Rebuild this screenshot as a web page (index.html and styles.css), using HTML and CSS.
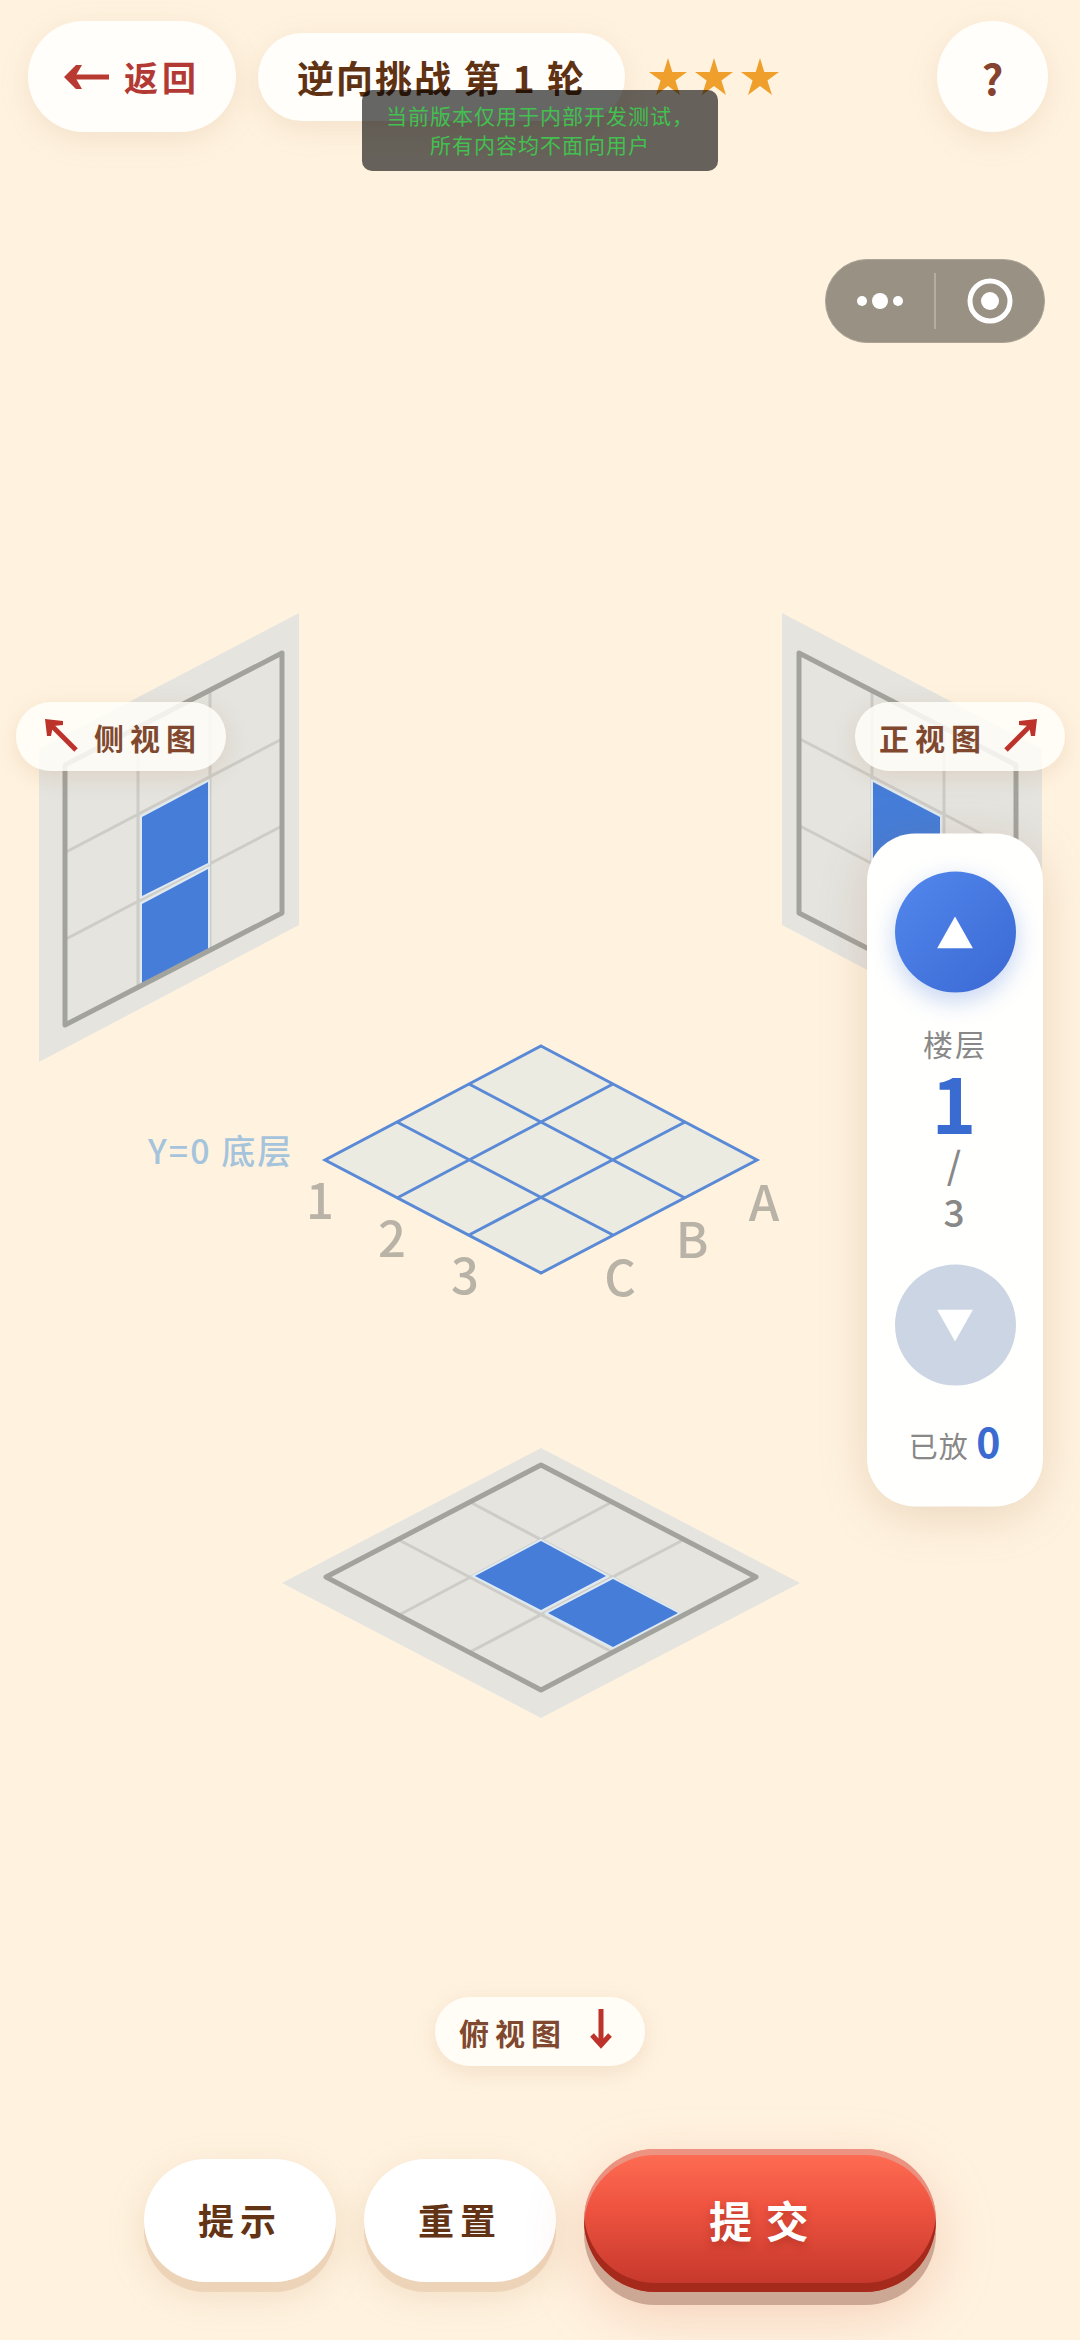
FILE: index.html
```html
<!DOCTYPE html>
<html lang="zh-CN">
<head>
    <meta charset="UTF-8">
    <meta name="viewport" content="width=device-width, initial-scale=1.0">
    <title>逆向挑战</title>
    <link rel="stylesheet" href="styles.css">
</head>
<body>
    <header class="top-bar">
        <button class="pill back-btn">
            <svg class="back-arrow" viewBox="0 0 46 26" aria-hidden="true">
                <path d="M8 13H45" /><path class="tip" d="M0 13L12 1H18L11 13L18 25H12Z" />
            </svg>
            <span>返回</span>
        </button>
        <h1 class="pill title">逆向挑战 第 1 轮</h1>
        <div class="stars" role="img" aria-label="难度三星">
            <svg viewBox="0 0 38 38"><path d="M19 0L23.3 14H38L26.4 22.5L31 37L19 28L7 37L11.6 22.5L0 14H14.7Z" /></svg>
            <svg viewBox="0 0 38 38"><path d="M19 0L23.3 14H38L26.4 22.5L31 37L19 28L7 37L11.6 22.5L0 14H14.7Z" /></svg>
            <svg viewBox="0 0 38 38"><path d="M19 0L23.3 14H38L26.4 22.5L31 37L19 28L7 37L11.6 22.5L0 14H14.7Z" /></svg>
        </div>
        <button class="pill help-btn" aria-label="帮助">?</button>
    </header>

    <main class="stage">
        <svg class="scene" viewBox="0 400 1080 1350">
            <!-- side view wall -->
            <polygon class="wall" points="39,749 299,613 299,925 39,1062" />
            <path class="grid" d="M138 727V987M210 690V950M66 852L282 739M66 939L282 826" />
            <polygon class="cell" points="142,817 208,782 208,863 142,896" />
            <polygon class="cell" points="142,904 208,869 208,951 142,985" />
            <polygon class="frame" points="65,765 282,653 282,913 65,1025" />

            <!-- front view wall -->
            <polygon class="wall" points="1042,749 782,613 782,925 1042,1062" />
            <path class="grid" d="M944 727V987M872 690V950M1016 852L800 739M1016 939L800 826" />
            <polygon class="cell" points="940,817 873,782 873,863 940,896" />
            <polygon class="cell" points="940,904 873,869 873,951 940,985" />
            <polygon class="frame" points="1016,765 799,653 799,913 1016,1025" />

            <!-- current floor -->
            <polygon class="floor" points="541,1046 757,1160 541,1273 325,1160" />
            <path class="floor-line" d="M469 1084L685 1198M397 1122L613 1235M613 1084L397 1198M685 1122L469 1235" />
            <text class="floor-name" x="148" y="1164">Y=0 底层</text>
            <g class="axis">
                <text x="320" y="1219">1</text>
                <text x="392" y="1257">2</text>
                <text x="465" y="1294">3</text>
                <text x="764" y="1221">A</text>
                <text x="692" y="1258">B</text>
                <text x="620" y="1296">C</text>
            </g>

            <!-- top view -->
            <polygon class="wall" points="541,1448 800,1583 541,1718 282,1583" />
            <path class="grid" d="M470 1502L683 1615M399 1540L612 1652M612 1502L399 1615M683 1540L470 1652" />
            <polygon class="cell" points="541,1541 606,1576 541,1610 475,1576" />
            <polygon class="cell" points="613,1579 678,1613 613,1647 548,1613" />
            <polygon class="frame" points="541,1465 756,1577 541,1690 326,1577" />
        </svg>
        <button class="view-tag view-top">
            <span>俯视图</span>
            <svg viewBox="0 0 40 40" aria-hidden="true"><path d="M20 0V36M11 26L20 36L29 26" /></svg>
        </button>
    </main>

    <footer class="actions">
        <button class="action-btn">提示</button>
        <button class="action-btn">重置</button>
        <button class="action-btn submit-btn">提 交</button>
    </footer>

    <button class="view-tag view-side">
        <svg viewBox="0 0 40 40" aria-hidden="true"><path d="M36 36L9 9" /><path class="tip" d="M5 5L23 7V11L13 12L11 22H7Z" /></svg>
        <span>侧视图</span>
    </button>
    <button class="view-tag view-front">
        <span>正视图</span>
        <svg viewBox="0 0 40 40" aria-hidden="true"><path d="M5 36L32 9" /><path class="tip" d="M36 5L18 7V11L28 12L30 22H34Z" /></svg>
    </button>

    <aside class="floor-panel">
        <button class="floor-btn" aria-label="上一层">
            <svg viewBox="0 0 36 32"><path d="M18 0L36 32H0Z" /></svg>
        </button>
        <div class="floor-info">
            <span class="floor-label">楼层</span>
            <strong class="floor-now">1</strong>
            <span class="floor-total">/</span>
            <span class="floor-total">3</span>
        </div>
        <button class="floor-btn" aria-label="下一层" disabled>
            <svg viewBox="0 0 36 32"><path d="M0 0H36L18 32Z" /></svg>
        </button>
        <div class="placed">已放 <strong>0</strong></div>
    </aside>

    <div class="capsule">
        <button aria-label="更多">
            <svg viewBox="0 0 50 50"><circle cx="7" cy="25" r="5" /><circle cx="25" cy="25" r="8" /><circle cx="43" cy="25" r="5" /></svg>
        </button>
        <button aria-label="关闭">
            <svg viewBox="0 0 50 50"><circle class="ring" cx="25" cy="25" r="20" /><circle cx="25" cy="25" r="9" /></svg>
        </button>
    </div>

    <div class="dev-notice">当前版本仅用于内部开发测试，<br>所有内容均不面向用户</div>
</body>
</html>
```

FILE: styles.css
```css
* {
    box-sizing: border-box;
}

body {
    margin: 0;
    min-height: 100vh;
    display: flex;
    flex-direction: column;
    position: relative;
    overflow-x: hidden;
    background-color: #fff3e0;
    color: #5f3213;
    font-family: "Noto Sans CJK SC", sans-serif;
}

button {
    border: none;
    padding: 0;
    font-family: inherit;
    cursor: pointer;
}

svg {
    display: block;
}

/* top bar */
.top-bar {
    display: flex;
    align-items: center;
    gap: 22px;
    padding: 21px 32px 21px 28px;
}

.pill {
    display: flex;
    align-items: center;
    justify-content: center;
    margin: 0;
    background-color: #fffefa;
    border-radius: 56px;
    box-shadow: 0 8px 32px rgba(160, 100, 40, 0.12);
    white-space: nowrap;
}

.back-btn {
    gap: 14px;
    height: 111px;
    padding: 0 36px;
    color: #b33a34;
    font-size: 34px;
    font-weight: 700;
    letter-spacing: 4px;
}

.back-arrow {
    width: 46px;
    height: 26px;
    fill: none;
    stroke: #b83a30;
    stroke-width: 5;
}

.back-arrow .tip {
    fill: #b83a30;
    stroke: none;
}

.title {
    height: 88px;
    padding: 0 39px;
    font-size: 37px;
    font-weight: 700;
    letter-spacing: 2px;
}

.stars {
    display: flex;
    gap: 8px;
    margin-left: 2px;
}

.stars svg {
    width: 38px;
    height: 38px;
    fill: #efa02c;
}

.help-btn {
    width: 111px;
    height: 111px;
    margin-left: auto;
    color: #86432f;
    font-size: 42px;
    font-weight: 700;
}

/* 3d scene */
.stage {
    flex: 1;
    display: flex;
    flex-direction: column;
    align-items: center;
}

.scene {
    flex: 1;
    width: 100%;
    min-height: 0;
}

.wall {
    fill: #e5e4df;
}

.grid {
    fill: none;
    stroke: #cdccc7;
    stroke-width: 3;
}

.frame {
    fill: none;
    stroke: #a3a39e;
    stroke-width: 5;
    stroke-linejoin: round;
}

.cell {
    fill: #457dd9;
    stroke: #dfe9f2;
    stroke-width: 4;
    paint-order: stroke;
}

.floor {
    fill: #ecebe1;
    stroke: #5a8ad6;
    stroke-width: 3;
}

.floor-line {
    stroke: #5a8ad6;
    stroke-width: 3;
}

.floor-name {
    fill: #a5c4dc;
    font-size: 34px;
    font-weight: 500;
    letter-spacing: 2px;
}

.axis {
    fill: #b8b2a7;
    font-size: 49px;
    font-weight: 500;
    text-anchor: middle;
}

/* view tags */
.view-tag {
    display: flex;
    align-items: center;
    gap: 14px;
    height: 69px;
    padding: 0 24px;
    background-color: rgba(255, 254, 248, 0.85);
    border-radius: 35px;
    box-shadow: 0 6px 24px rgba(160, 100, 40, 0.14);
    color: #80482f;
    font-size: 30px;
    font-weight: 700;
    letter-spacing: 6px;
    white-space: nowrap;
}

.view-tag svg {
    width: 40px;
    height: 40px;
    margin-bottom: 5px;
    fill: none;
    stroke: #bd332b;
    stroke-width: 5;
}

.view-tag .tip {
    fill: #bd332b;
    stroke: none;
}

.view-side,
.view-front {
    position: absolute;
    top: 30%;
}

.view-side {
    left: 16px;
}

.view-front {
    right: 15px;
}

/* floor panel */
.floor-panel {
    position: absolute;
    top: 50%;
    right: 37px;
    transform: translateY(-50%);
    display: flex;
    flex-direction: column;
    align-items: center;
    width: 176px;
    padding: 38px 0;
    background-color: #fffffd;
    border-radius: 48px;
    box-shadow: 0 10px 50px rgba(150, 95, 50, 0.2);
    color: #888;
}

.floor-btn {
    display: flex;
    align-items: center;
    justify-content: center;
    width: 121px;
    height: 121px;
    border-radius: 50%;
    background: linear-gradient(135deg, #5288ee, #3a68d2);
    box-shadow: 0 8px 24px rgba(70, 120, 225, 0.32);
}

.floor-btn svg {
    width: 36px;
    height: 32px;
    fill: #fff;
}

.floor-btn:disabled {
    background: #ccd5e3;
    box-shadow: none;
    cursor: default;
}

.floor-info {
    display: flex;
    flex-direction: column;
    align-items: center;
    margin: 30px 0;
    letter-spacing: 2px;
}

.floor-label {
    font-size: 30px;
    line-height: 40px;
}

.floor-now {
    color: #396bd1;
    font-size: 76px;
    line-height: 76px;
}

.floor-total {
    font-size: 37px;
    font-weight: 500;
    line-height: 48px;
}

.placed {
    margin-top: 30px;
    font-size: 29px;
    line-height: 48px;
    letter-spacing: 1px;
}

.placed strong {
    color: #396bd1;
    font-size: 41px;
}

/* bottom buttons */
.actions {
    display: flex;
    align-items: center;
    justify-content: center;
    gap: 28px;
    padding: 83px 28px 48px;
}

.action-btn {
    width: 192px;
    height: 123px;
    padding-bottom: 4px;
    background-color: #fff;
    border-radius: 62px;
    box-shadow: 0 10px 0 #edd3b7, 0 12px 40px rgba(160, 100, 40, 0.16);
    color: #633315;
    font-size: 36px;
    font-weight: 700;
    letter-spacing: 6px;
}

.submit-btn {
    width: 352px;
    height: 143px;
    border-radius: 72px;
    background: linear-gradient(#ff6e55, #ef5440 40%, #c2352a);
    box-shadow: inset 0 6px 0 rgba(230, 160, 145, 0.75), inset 0 -9px 0 #a52a1c, 0 13px 0 #cba794, 0 20px 60px rgba(210, 90, 60, 0.25);
    color: #fff;
    font-size: 43px;
    letter-spacing: 2px;
    text-shadow: 0 4px 8px rgba(120, 20, 10, 0.35);
}

/* mini program capsule */
.capsule {
    position: absolute;
    top: 259px;
    right: 35px;
    display: flex;
    align-items: center;
    width: 220px;
    height: 84px;
    background-color: #999184;
    border: 1px solid #aba396;
    border-radius: 42px;
}

.capsule button {
    flex: 1;
    display: flex;
    justify-content: center;
    height: 56px;
    align-items: center;
    background: none;
}

.capsule button + button {
    border-left: 2px solid #b3ada2;
}

.capsule svg {
    width: 50px;
    height: 50px;
    fill: #fff;
}

.capsule .ring {
    fill: none;
    stroke: #fff;
    stroke-width: 5;
}

/* dev build notice */
.dev-notice {
    position: absolute;
    top: 90px;
    left: 50%;
    transform: translateX(-50%);
    padding: 11px 24px 12px;
    background-color: rgba(0, 0, 0, 0.6);
    border-radius: 10px;
    color: #43c04f;
    font-size: 21px;
    line-height: 29px;
    letter-spacing: 1px;
    text-align: center;
    white-space: nowrap;
}
```
